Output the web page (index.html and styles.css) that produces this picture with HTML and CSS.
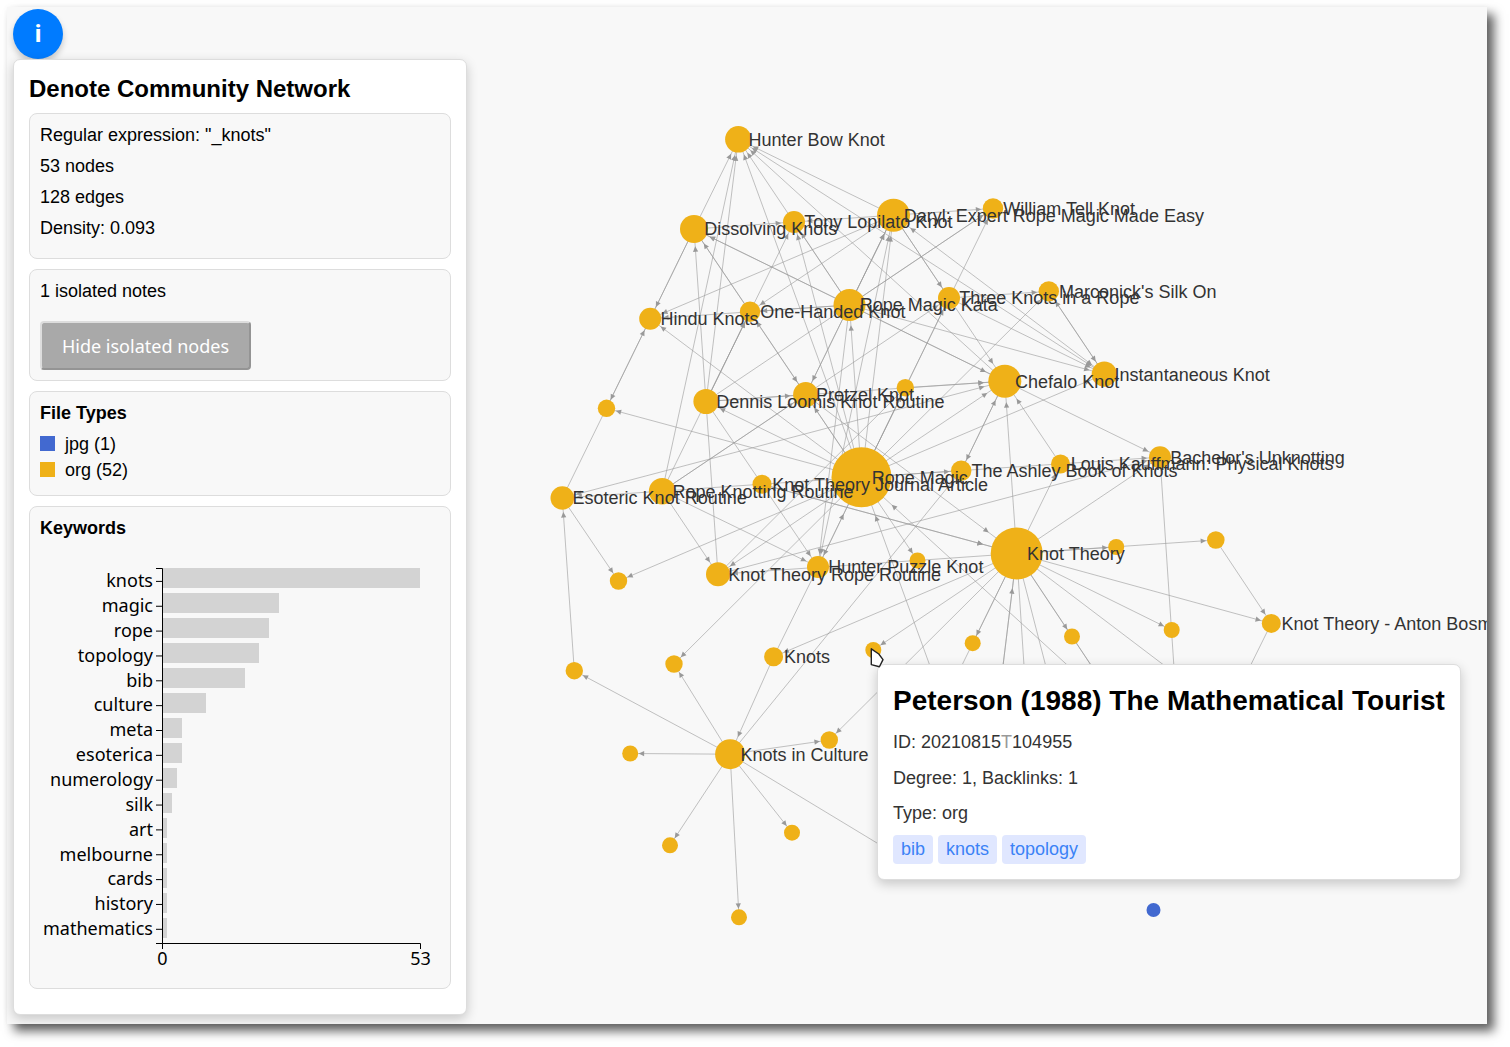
FILE: index.html
```html
<!DOCTYPE html>
<html lang="en">
<head>
<meta charset="utf-8">
<title>Denote Community Network</title>
<link rel="stylesheet" href="styles.css">
</head>
<body>
<main class="frame">
  <svg class="graph" id="graph" width="1480" height="1017" viewBox="7 7 1480 1017"></svg>
  <button class="info">i</button>
  <aside class="panel">
    <h1 class="panel-title">Denote Community Network</h1>
    <section class="box stats">
      <p>Regular expression: "_knots"</p>
      <p>53 nodes</p>
      <p>128 edges</p>
      <p>Density: 0.093</p>
    </section>
    <section class="box isolated">
      <p>1 isolated notes</p>
      <button class="toggle">Hide isolated nodes</button>
    </section>
    <section class="box types">
      <h2>File Types</h2>
      <div class="legend"><span class="swatch jpg"></span>jpg (1)</div>
      <div class="legend"><span class="swatch org"></span>org (52)</div>
    </section>
    <section class="box keywords">
      <h2>Keywords</h2>
      <svg class="chart" id="chart" width="400" height="430" viewBox="40 546 400 430"></svg>
    </section>
  </aside>
  <article class="tooltip">
    <h2 class="tooltip-title">Peterson (1988) The Mathematical Tourist</h2>
    <p>ID: 20210815<span class="sep">T</span>104955</p>
    <p>Degree: 1, Backlinks: 1</p>
    <p>Type: org</p>
    <div class="tags"><span>bib</span><span>knots</span><span>topology</span></div>
  </article>
  <svg class="cursor" width="20" height="24" viewBox="0 0 20 24"><path d="M2.3 1.8 L9.8 7 L14 12.6 L10.4 19.8 L2.3 17.6 Z"/></svg>
</main>
<script src="graph.js"></script>
</body>
</html>
```
FILE: styles.css
```css
* { box-sizing: border-box; }
body {
  margin: 0;
  padding: 7px 0 0 7px;
  height: 1047px;
  overflow: hidden;
  background: #fff;
  font: 18px/21px "Liberation Sans", Arial, sans-serif;
  color: #000;
}
.frame {
  position: relative;
  width: 1480px;
  height: 1017px;
  padding: 2px 6px;
  background: #f8f8f8;
  box-shadow: 7px 7px 10px rgba(0, 0, 0, .63), 0 0 5px rgba(0, 0, 0, .03);
}
h1, h2, p { margin: 0; }
.graph { position: absolute; left: 0; top: 0; }
.edge { stroke: #999; stroke-opacity: .6; stroke-width: 1; }
.arrow { fill: #999; }
.node { fill: #efb118; }
.node.jpg { fill: #4269d0; }
.label { fill: #333; font-size: 18px; }
.info {
  position: relative;
  display: block;
  width: 50px;
  height: 50px;
  padding: 0 0 4px;
  border: 0;
  border-radius: 50%;
  background: #007bff;
  color: #fff;
  font: bold 24px "Noto Sans", sans-serif;
  box-shadow: 0 4px 6px rgba(0, 0, 0, .2);
}
.panel {
  position: relative;
  display: flex;
  flex-direction: column;
  gap: 10px;
  width: 454px;
  height: 956px;
  padding: 14px 15px;
  border: 1px solid #ddd;
  border-radius: 7px;
  background: #fff;
  box-shadow: 0 4px 12px rgba(0, 0, 0, .2);
}
.panel-title { height: 29px; font-size: 24px; line-height: 30px; }
.box {
  padding: 11px 10px 9px;
  border: 1px solid #ddd;
  border-radius: 8px;
  background: #f8f8f8;
}
.box h2 { font-size: 18px; line-height: 21px; }
.stats { height: 146px; display: flex; flex-direction: column; gap: 10px; }
.isolated { height: 112px; }
.toggle {
  display: block;
  width: 211px;
  height: 49px;
  margin-top: 19px;
  padding: 0;
  border: 2px solid;
  border-color: #ddd #949494 #949494 #ddd;
  border-radius: 4px;
  background: #a9a9a9;
  color: #fff;
  font: 18px "Noto Sans", sans-serif;
}
.types { height: 105px; }
.types h2 { margin-bottom: 10px; }
.legend { display: flex; align-items: center; gap: 10px; margin-bottom: 5px; }
.swatch { width: 15px; height: 15px; margin-bottom: 2px; }
.swatch.jpg { background: #4269d0; }
.swatch.org { background: #efb118; }
.keywords { height: 483px; }
.chart { display: block; margin-top: 7px; }
.chart text { font: 18px "Noto Sans", sans-serif; }
.bar { fill: #d3d3d3; }
.axis { stroke: #000; fill: none; }
.tooltip {
  position: absolute;
  left: 870px;
  top: 657px;
  width: 584px;
  height: 216px;
  padding: 15px;
  border: 1px solid #ddd;
  border-radius: 7px;
  background: #fff;
  box-shadow: 0 4px 12px rgba(0, 0, 0, .2);
  color: #333;
}
.tooltip-title { margin-bottom: 11px; font-size: 28px; line-height: 41px; color: #000; white-space: nowrap; }
.tooltip p { margin-bottom: 14.5px; line-height: 21px; }
.sep { color: #999; }
.tags { display: flex; gap: 5px; margin-top: -3.5px; }
.tags span { padding: 4px 8px; border-radius: 4px; background: #e0e7ff; color: #3b82f6; }
.cursor { position: absolute; left: 862px; top: 640px; fill: #fff; stroke: #222; stroke-width: 1.4; stroke-linejoin: round; }
```
FILE: graph.js
```js
const NS = 'http://www.w3.org/2000/svg';
function add(parent, tag, attrs, text) {
  const el = document.createElementNS(NS, tag);
  for (const k in attrs) el.setAttribute(k, attrs[k]);
  if (text) el.textContent = text;
  parent.appendChild(el);
}

// id: [x, y, radius, label]
const nodes = {
  HB: [738.3, 139.3, 13.2, 'Hunter Bow Knot'],
  DK: [694, 229, 14, 'Dissolving Knots'],
  TL: [794, 222, 11, 'Tony Lopilato Knot'],
  DA: [893.5, 215.2, 16.5, 'Daryl: Expert Rope Magic Made Easy'],
  WT: [993, 208.5, 10.2, 'William Tell Knot'],
  HK: [650.2, 318.7, 11, 'Hindu Knots'],
  OH: [750, 311.7, 10.2, 'One-Handed Knot'],
  RK: [849.5, 305, 16, 'Rope Magic Kata'],
  TK: [949, 298, 11, 'Three Knots in a Rope'],
  MS: [1048.8, 291.4, 10.2, "Marconick's Silk On"],
  A1: [606.5, 408.3, 8.7],
  DL: [706, 401.5, 12.6, 'Dennis Loomis Knot Routine'],
  PK: [805.7, 394.7, 12.6, 'Pretzel Knot'],
  A2: [905.3, 387.7, 8.7],
  CK: [1004.8, 381.2, 16.5, 'Chefalo Knot'],
  IK: [1104.3, 374.2, 12.6, 'Instantaneous Knot'],
  ES: [562.3, 498, 11.8, 'Esoteric Knot Routine'],
  RR: [662.2, 491.2, 13.3, 'Rope Knotting Routine'],
  KJ: [762, 484.3, 9.5, 'Knot Theory Journal Article'],
  RM: [861.5, 477.3, 30, 'Rope Magic'],
  AB: [961.2, 470.7, 10.2, 'The Ashley Book of Knots'],
  LK: [1060.5, 464, 9.5, 'Louis Kauffmann: Physical Knots'],
  BU: [1160, 457.2, 11, "Bachelor's Unknotting"],
  B1: [618.5, 581, 8.7],
  KR: [718, 574.3, 12, 'Knot Theory Rope Routine'],
  HP: [818, 567, 11, 'Hunter Puzzle Knot'],
  B2: [917.5, 560.5, 8],
  KT: [1016.7, 553.5, 26, 'Knot Theory'],
  B3: [1116.2, 547, 8],
  B4: [1215.8, 540, 8.8],
  C1: [574.3, 670.7, 8.7],
  C2: [674, 664, 8.7],
  KN: [773.6, 656.8, 9.5, 'Knots'],
  PM: [873.3, 650, 8],
  C3: [972.7, 643.2, 8],
  C4: [1072, 636.5, 8],
  C5: [1171.7, 630, 8],
  KA: [1271.3, 623.4, 9.5, 'Knot Theory - Anton Bosman'],
  D1: [630.2, 753.5, 8],
  KC: [730.1, 754.2, 15, 'Knots in Culture'],
  D2: [829.3, 740, 8.7],
  D3: [928.5, 733.5, 8],
  D4: [1028, 727, 8],
  D5: [1127.5, 720, 8],
  D6: [1227, 713, 8],
  E1: [670, 845.3, 8],
  E2: [792, 832.7, 8],
  E3: [984.6, 816.4, 8],
  E4: [1083, 810, 8],
  E5: [1183, 803, 8],
  F1: [739, 917.3, 8],
  F2: [920, 869, 8],
  JP: [1153.5, 910, 7]
};

// "a>b" points at b, "a=b" has a head at both ends, "a-b" has none
const edges = `DK>HB RM>HB RK>HB CK>HB IK=HB DA>HB DL>HB RR>HB
DK>TL DA>TL RM>TL RK>TL DL>TL DL>OH RR>OH IK=DA TK>IK RK>IK DA>HK DA>OH
RK>DA PK>DA DA>PK RM>DA DA=HP RK>HP RM>RK DA>WT DL>WT RK>WT RM>WT RM>TK RM>A2
DA>TK DA>CK LK>CK TK>MS MS>IK IK>MS RM>MS RK>DK RK>CK CK>DK RM>PK RM>OH DK>PK OH>DK
DK>HK DK>A1 ES>HK RK>OH RK>HK RM>HK KR>DK DL>PK DL>CK A2>CK ES=CK RM>CK RM>KR KR-A2
KR>BU RM>IK RM>B1 RM>A1 RM>DL RR>PK RR>TK RM>ES KJ>KT KJ>KT DL>HP RR>HP RR>KR
RM>HP HP>RM HP-KN KT>KR CK>AB AB>CK AB-KC RM>AB RM>BU RM>B2 E3>RM D5>RM PK>KT
KT>BU KT>PM KT>LK KT>C3 KT>D3 KT>CK KT>C4 KT>D5 C4>D5 KT>C5 KT>B3 KT>B4 KT>KA B4>KA
KA>D6 BU>E5 KT>D6 KT>D4 KT>E4 E3>KT KT>E3 KT>KN KT>D2 CK>BU RM>C2 ES>B1 C1>ES KN>KC
KC>C1 KC>C2 KC>D1 KC>E1 KC>F1 KC>E2 KC>D2 KC-F2`.split(/\s+/);

const graph = document.getElementById('graph');
function head(a, b) {
  const [x1, y1] = a, [x2, y2, r] = b;
  const len = Math.hypot(x2 - x1, y2 - y1);
  const ux = (x2 - x1) / len, uy = (y2 - y1) / len;
  const d = 1.47 * r - 3.2;
  const tx = x2 - ux * d, ty = y2 - uy * d;
  const bx = tx - ux * 5.4, by = ty - uy * 5.4;
  add(graph, 'path', {
    class: 'arrow',
    d: `M${tx} ${ty}L${bx - uy * 2.6} ${by + ux * 2.6}L${bx + uy * 2.6} ${by - ux * 2.6}Z`
  });
}
for (const e of edges) {
  const a = nodes[e.slice(0, 2)], b = nodes[e.slice(3)];
  add(graph, 'line', { class: 'edge', x1: a[0], y1: a[1], x2: b[0], y2: b[1] });
  if (e[2] !== '-') head(a, b);
  if (e[2] === '=') head(b, a);
}
for (const id in nodes) {
  const [cx, cy, r] = nodes[id];
  add(graph, 'circle', { class: id === 'JP' ? 'node jpg' : 'node', cx, cy, r });
}
for (const id in nodes) {
  const [x, y, , label] = nodes[id];
  if (label) add(graph, 'text', { class: 'label', x: x + 10.3, y: y + 6.4 }, label);
}

// Keyword frequencies
const keywords = [['knots', 53], ['magic', 24], ['rope', 22], ['topology', 20], ['bib', 17],
  ['culture', 9], ['meta', 4], ['esoterica', 4], ['numerology', 3], ['silk', 2], ['art', 1],
  ['melbourne', 1], ['cards', 1], ['history', 1], ['mathematics', 1]];
const chart = document.getElementById('chart');
keywords.forEach(([name, count], i) => {
  const y = 581.4 + i * 24.85;
  add(chart, 'rect', { class: 'bar', x: 162, y: 568 + i * 25, width: Math.round(count * 4.85 + 0.46), height: 20 });
  add(chart, 'path', { class: 'axis', d: `M156 ${y}H162.5` });
  add(chart, 'text', { x: 153, y: y + 5.75, 'text-anchor': 'end' }, name);
});
add(chart, 'path', { class: 'axis', d: 'M156 568.5H162.5V943.5H156' });
add(chart, 'path', { class: 'axis', d: 'M162.5 949V943.5H420.5V949' });
add(chart, 'text', { x: 162.5, y: 965, 'text-anchor': 'middle' }, '0');
add(chart, 'text', { x: 420.5, y: 965, 'text-anchor': 'middle' }, '53');
```
